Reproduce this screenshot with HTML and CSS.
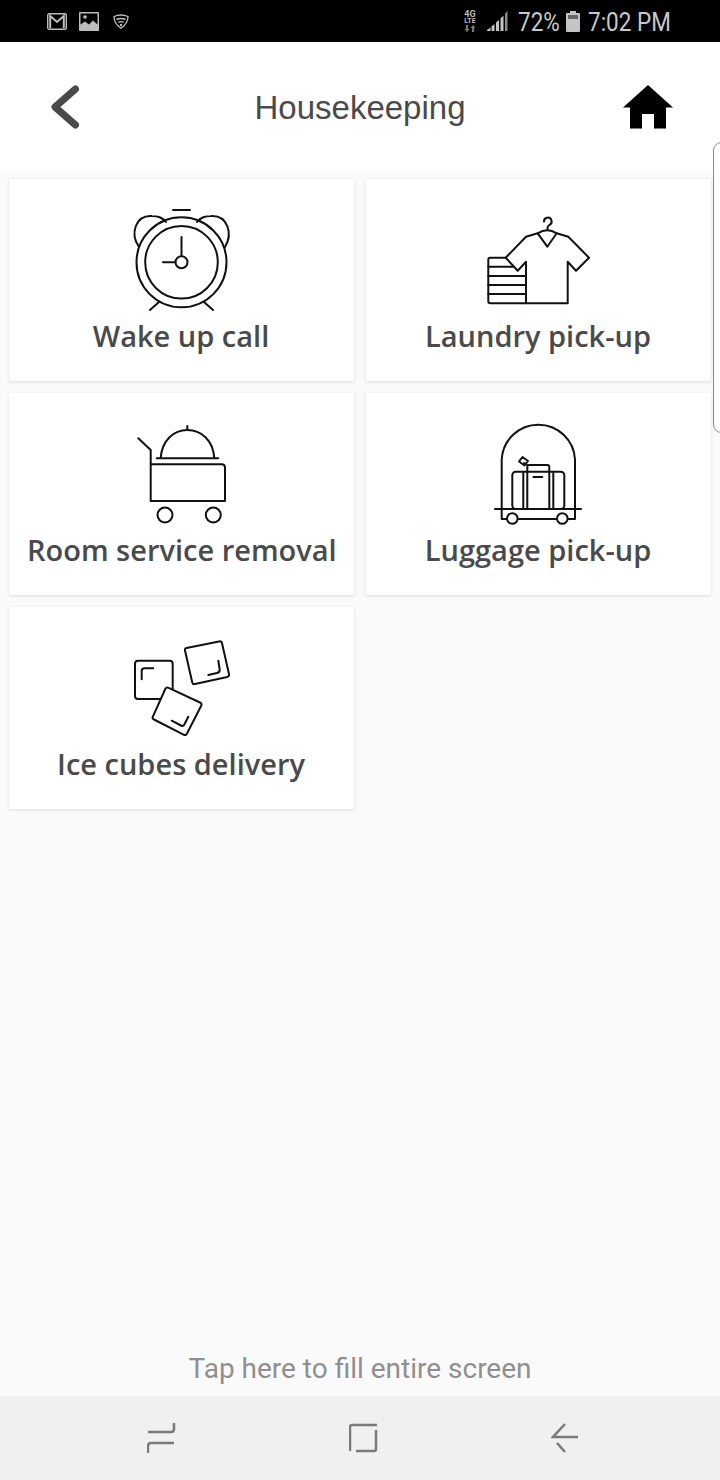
FILE: index.html
```html
<!DOCTYPE html>
<html lang="en">
<head>
  <meta charset="UTF-8" />
  <title>Housekeeping</title>
  <link rel="stylesheet" href="styles.css">
</head>
<body>
<div class="page">
  <div class="status-bar">
    <div class="status-left">
      <svg class="st-icon" width="20" height="17" viewBox="0 0 20 17">
        <rect x="0.7" y="0.7" width="18.6" height="15.6" rx="1.5" fill="none" stroke="#bdbdbd" stroke-width="1.4"/>
        <path d="M3.2 15V3l6.8 6 6.8-6v12" fill="none" stroke="#bdbdbd" stroke-width="2"/>
      </svg>
      <svg class="st-icon" width="20" height="19" viewBox="0 0 20 19">
        <rect width="20" height="19" rx="1" fill="#bdbdbd"/>
        <path d="M1.5 1.5h17v11l-4.500-4-4 4-4-3-4.500 3z" fill="#000"/>
        <circle cx="6" cy="5" r="1.800" fill="#bdbdbd"/>
      </svg>
      <svg class="st-icon" width="16" height="15" viewBox="0 0 16 15">
        <path d="M1 2.500Q8-.5 15 2.500Q15 9.500 8 14.300Q1 9.500 1 2.500z" fill="none" stroke="#bdbdbd" stroke-width="1.300"/>
        <path d="M3.500 5.500Q8 3.500 12.500 5.500M5.300 8.300Q8 7 10.700 8.300" fill="none" stroke="#bdbdbd" stroke-width="1.400"/>
        <circle cx="8" cy="11" r="1.200" fill="#bdbdbd"/>
      </svg>
    </div>
    <div class="status-right">
      <div class="lte">
        <span class="lte-4g">4G</span>
        <span>LTE</span>
        <svg class="lte-arrows" width="12" height="7" viewBox="0 0 12 7">
          <path d="M3 7 .5 4H2V0h2v4h1.500zM9 0l2.500 3H10v4H8V3H6.500z" fill="#777"/>
        </svg>
      </div>
      <svg class="signal" width="21" height="20" viewBox="0 0 21 20">
        <path d="M0 20v-1l3.500-2.500V20zM4.500 20v-4.500L7.500 13v7zM9 20V11.500L12 9v11zM13.500 20V7.500L16.500 4.500V20z" fill="#c4c4c4"/>
        <path d="M18 20V2.500L20.500 0v20z" fill="#8a8a8a"/>
      </svg>
      <span class="pct">72%</span>
      <svg class="battery" width="14" height="21" viewBox="0 0 14 21">
        <path d="M4 0h6v2h3a1 1 0 0 1 1 1v17a1 1 0 0 1-1 1H1a1 1 0 0 1-1-1V3a1 1 0 0 1 1-1h3z" fill="#c4c4c4"/>
        <rect x="2" y="4" width="10" height="4" fill="#666"/>
      </svg>
      <span class="clock">7:02 PM</span>
    </div>
  </div>

  <div class="header">
    <svg class="back" width="40" height="52" viewBox="0 0 40 52">
      <path d="M27.500 8 7 26l20.500 18" fill="none" stroke="#4a4a4a" stroke-width="7" stroke-linecap="round" stroke-linejoin="round"/>
    </svg>
    <h1 class="title">Housekeeping</h1>
    <svg class="home" width="50" height="44" viewBox="0 0 50 44">
      <path d="M25 0 50 22.500H43V43.500H31V29H19V43.500H7V22.500H0z" fill="#000"/>
    </svg>
  </div>

  <div class="main">
    <div class="grid">
      <div class="card">
        <svg class="pic" width="120" height="131" viewBox="121 185 120 131">
          <path d="M173 210h17"/>
          <path d="M139 247C130 234 135 215 152 216C158 216 163 218 166 222"/>
          <path d="M197 222C200 218 205 216 211 216C228 215 233 234 225 247"/>
          <circle cx="181.500" cy="262.300" r="45"/>
          <circle cx="181.500" cy="262.300" r="36.300"/>
          <circle cx="181.500" cy="262.300" r="6"/>
          <path d="M181.500 237v19M163 262.300h12.500"/>
          <path d="M150 310l9-8M213 310l-9-8"/>
        </svg>
        <div class="label">Wake up call</div>
      </div>
      <div class="card">
        <svg class="pic" width="120" height="131" viewBox="478 185 120 131">
          <path d="M544 221.500a3.800 3.800 0 1 1 5.500 3.300q-2 1-2 3.200v2"/>
          <path d="M537.700 233.300Q547.300 227 556.700 233.300L547.300 246.700z"/>
          <path d="M537.700 233.300 526 236.700 505.700 257.700 517.700 270.700 526 261.700V303.300H567.700V261.700L576 270.700 589 257.700 568.300 236.700 556.700 233.300"/>
          <path d="M505.700 257.700H490.300Q488.300 257.700 488.300 259.700V301.300Q488.300 303.300 490.300 303.300H526"/>
          <path d="M488.300 266.700H513M488.300 276H526M488.300 285H526M488.300 294H526"/>
        </svg>
        <div class="label">Laundry pick-up</div>
      </div>
      <div class="card">
        <svg class="pic" width="120" height="131" viewBox="121 399 120 131">
          <path d="M138.300 438.300 150.700 450V501H225V467.700Q225 464.300 221.700 464.300H150.700"/>
          <path d="M156.700 458.300H218.300"/>
          <path d="M160.700 458C162 440 174 430 187.300 430C201 430 213 440 214.300 458"/>
          <path d="M187.300 426v4"/>
          <circle cx="165" cy="515" r="7.500"/>
          <circle cx="213.300" cy="515" r="7.500"/>
        </svg>
        <div class="label">Room service removal</div>
      </div>
      <div class="card">
        <svg class="pic" width="120" height="131" viewBox="478 399 120 131">
          <path d="M501.700 509V459.500A36.700 36.700 0 0 1 575 459.500V509"/>
          <path d="M495 509H581"/>
          <path d="M501.700 509V519H506.500M518 519H557M568 519H575V509"/>
          <circle cx="512.300" cy="518.500" r="5.300"/>
          <circle cx="562.300" cy="518.500" r="5.300"/>
          <rect x="512.300" y="471.700" width="52" height="37.300" rx="3.500"/>
          <path d="M523.300 471.700V509M527.300 471.700V509M549.300 471.700V509M553.300 471.700V509"/>
          <path d="M527.300 471.700V467Q527.300 465 529.300 465H547.300Q549.300 465 549.300 467V471.700"/>
          <path d="M533.300 477h9"/>
          <path d="M527.300 465 524 463"/>
          <path d="M519 461.500 522.500 457 528 461 524.500 465.500z"/>
        </svg>
        <div class="label">Luggage pick-up</div>
      </div>
      <div class="card">
        <svg class="pic" width="120" height="131" viewBox="121 613 120 131">
          <rect x="135" y="660.700" width="37.700" height="38.300" rx="3"/>
          <path d="M141.700 679.300V671Q141.700 668.300 144.500 668.300H153.300"/>
          <path d="M186.500 648 219 641.400Q221.500 641 222 643.300L229 674Q229.500 676.300 227.200 676.900L195 684Q192.700 684.500 192.200 682.200L185 650.500Q184.600 648.400 186.500 648z"/>
          <path d="M208.300 675 217 673Q220 672.300 219.700 669.500L218.300 660.700"/>
          <path class="solid" d="M165.500 688.500Q166.700 686.800 168.700 687.800L200 702.500Q202.300 703.600 201.200 705.800L187 733.500Q185.800 735.900 183.500 734.700L154 719.500Q151.700 718.300 153 716.300z"/>
          <path d="M171.700 720.700 181 725.500Q183.300 726.700 184.500 724.300L188.300 716.700"/>
        </svg>
        <div class="label">Ice cubes delivery</div>
      </div>
    </div>
    <div class="hint">Tap here to fill entire screen</div>
  </div>

  <div class="navbar">
    <svg class="nav-icon" width="29" height="32" viewBox="0 0 29 32">
      <path d="M27 1V7Q27 10 24 10H1M1 31V24Q1 21 4 21H27"/>
    </svg>
    <svg class="nav-icon" width="30" height="30" viewBox="1 0 30 30">
      <path d="M29 2H4Q2 2 2 4V28M8 28H26Q28 28 28 26V7"/>
    </svg>
    <svg class="nav-icon" width="28" height="30" viewBox="0 0 28 30">
      <path d="M14 1 2 14H27M6 20 14 29"/>
    </svg>
  </div>

  <div class="edge-handle"></div>
</div>
</body>
</html>
```

FILE: styles.css
```css
html, body {
  margin: 0;
  padding: 0;
}

.page {
  position: relative;
  width: 720px;
  height: 1480px;
  display: flex;
  flex-direction: column;
  overflow: hidden;
  background: #fafafa;
  font-family: "Open Sans", sans-serif;
}

.status-bar {
  height: 42px;
  flex: none;
  background: #000;
  display: flex;
  align-items: center;
  justify-content: space-between;
  padding: 0 49px 0 47px;
  color: #c8c8c8;
  font-family: Roboto, sans-serif;
  font-size: 25px;
}

.status-left {
  display: flex;
  align-items: center;
  gap: 12px;
}

.status-left .st-icon:last-child {
  margin-left: 2px;
}

.status-right {
  display: flex;
  align-items: center;
}

.lte {
  display: flex;
  flex-direction: column;
  align-items: center;
  width: 14px;
  font-size: 7px;
  font-weight: 700;
  line-height: 7px;
  color: #bdbdbd;
}

.lte-4g {
  font-size: 9px;
}

.lte-arrows {
  display: block;
}

.signal {
  margin-left: 10px;
}

/* status text is narrower than Roboto here, squeeze it to the box */
.pct, .clock {
  display: inline-block;
  margin-top: 2px;
  white-space: nowrap;
  transform: scaleX(0.9);
  transform-origin: left center;
}

.pct {
  width: 40px;
  margin-left: 10px;
}

.battery {
  margin-left: 8px;
}

.clock {
  width: 83px;
  margin-left: 8px;
}

.header {
  height: 129px;
  flex: none;
  background: #fff;
  display: flex;
  align-items: center;
  justify-content: space-between;
  padding: 0 47px 0 48px;
}

.back {
  margin-right: 9px;
}

.title {
  margin: 2px 0 0;
  font-family: "Liberation Sans", sans-serif;
  font-size: 33px;
  font-weight: 400;
  color: #4a4a4a;
}

.main {
  flex: 1;
  display: flex;
  flex-direction: column;
  padding: 8px 9px 7px;
}

.grid {
  display: grid;
  grid-template-columns: repeat(2, 345px);
  grid-auto-rows: 202px;
  gap: 12px;
}

.card {
  background: #fff;
  box-shadow: 0 1px 3px rgba(0,0,0,0.12);
  padding: 6px 19px 0 18px;
  display: flex;
  flex-direction: column;
  align-items: center;
  overflow: hidden;
}

.pic {
  flex: none;
  display: block;
  fill: none;
  stroke: #111;
  stroke-width: 2;
  stroke-linecap: round;
  stroke-linejoin: round;
}

.pic .solid {
  fill: #fff;
}

.label {
  width: 100%;
  height: 40px;
  font-size: 29px;
  font-weight: 600;
  line-height: 40px;
  color: #4a4a4a;
  text-align: center;
  white-space: nowrap;
  overflow: hidden;
}

.hint {
  margin-top: auto;
  font-family: Roboto, sans-serif;
  font-size: 28px;
  line-height: 40px;
  color: #8f8f8f;
  text-align: center;
}

.navbar {
  height: 84px;
  flex: none;
  background: #f0f0f0;
  display: flex;
  align-items: center;
  justify-content: space-between;
  padding: 0 141px 0 147px;
}

.nav-icon {
  fill: none;
  stroke: #7a7a7a;
  stroke-width: 2.5;
}

.edge-handle {
  position: absolute;
  top: 142px;
  right: -10px;
  width: 15px;
  height: 289px;
  background: #fff;
  border: 1px solid #888;
  border-radius: 10px;
}
```
